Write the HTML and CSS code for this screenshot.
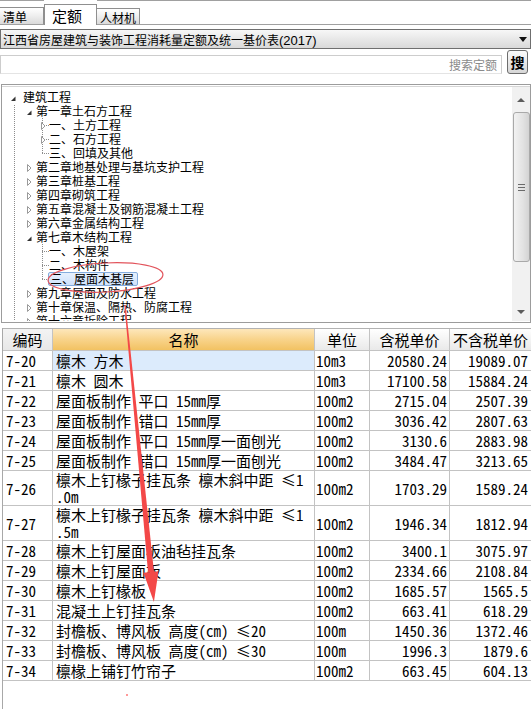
FILE: index.html
```html
<!DOCTYPE html>
<html lang="zh-CN">
<head>
<meta charset="utf-8">
<title>定额</title>
<link rel="stylesheet" href="styles.css">
</head>
<body>
<div class="tabs">
  <div class="tab t1">清单</div>
  <div class="tab active"><span class="lbl">定额</span></div>
  <div class="tab t3">人材机</div>
  <div class="tabfill"></div>
</div>

<div class="combo">
  <span class="combo-text">江西省房屋建筑与装饰工程消耗量定额及统一基价表<span class="yr">(2017)</span></span>
  <svg class="caret" width="8" height="5" viewBox="0 0 8 5"><path d="M0 0H8L4 5Z" fill="#111"/></svg>
</div>

<div class="search">
  <div class="input"><span class="ph">搜索定额</span></div>
  <button class="btn">搜</button>
</div>

<div class="tree">
  <div class="tree-in">
    <div class="nodes">
      <div class="row l0"><svg class="exp" width="6" height="14" viewBox="0 0 6 14"><path d="M4.5 6.5V11H0Z" fill="#333"/></svg><span>建筑工程</span></div>
      <div class="row l1"><svg class="exp" width="6" height="14" viewBox="0 0 6 14"><path d="M4.5 6.5V11H0Z" fill="#333"/></svg><span>第一章土石方工程</span></div>
      <div class="row l2 mid"><svg class="exp" width="6" height="14" viewBox="0 0 6 14"><path d="M0.5 4.5L4 8L0.5 11.5Z" fill="#fff" stroke="#9a9a9a"/></svg><span>一、土方工程</span></div>
      <div class="row l2 mid"><svg class="exp" width="6" height="14" viewBox="0 0 6 14"><path d="M0.5 4.5L4 8L0.5 11.5Z" fill="#fff" stroke="#9a9a9a"/></svg><span>二、石方工程</span></div>
      <div class="row l2 last"><i class="exp"></i><span>三、回填及其他</span></div>
      <div class="row l1"><svg class="exp" width="6" height="14" viewBox="0 0 6 14"><path d="M0.5 4.5L4 8L0.5 11.5Z" fill="#fff" stroke="#9a9a9a"/></svg><span>第二章地基处理与基坑支护工程</span></div>
      <div class="row l1"><svg class="exp" width="6" height="14" viewBox="0 0 6 14"><path d="M0.5 4.5L4 8L0.5 11.5Z" fill="#fff" stroke="#9a9a9a"/></svg><span>第三章桩基工程</span></div>
      <div class="row l1"><svg class="exp" width="6" height="14" viewBox="0 0 6 14"><path d="M0.5 4.5L4 8L0.5 11.5Z" fill="#fff" stroke="#9a9a9a"/></svg><span>第四章砌筑工程</span></div>
      <div class="row l1"><svg class="exp" width="6" height="14" viewBox="0 0 6 14"><path d="M0.5 4.5L4 8L0.5 11.5Z" fill="#fff" stroke="#9a9a9a"/></svg><span>第五章混凝土及钢筋混凝土工程</span></div>
      <div class="row l1"><svg class="exp" width="6" height="14" viewBox="0 0 6 14"><path d="M0.5 4.5L4 8L0.5 11.5Z" fill="#fff" stroke="#9a9a9a"/></svg><span>第六章金属结构工程</span></div>
      <div class="row l1"><svg class="exp" width="6" height="14" viewBox="0 0 6 14"><path d="M4.5 6.5V11H0Z" fill="#333"/></svg><span>第七章木结构工程</span></div>
      <div class="row l2 mid"><i class="exp"></i><span>一、木屋架</span></div>
      <div class="row l2 mid"><i class="exp"></i><span>二、木构件</span></div>
      <div class="row l2 last"><i class="exp"></i><span class="sel">三、屋面木基层</span></div>
      <div class="row l1"><svg class="exp" width="6" height="14" viewBox="0 0 6 14"><path d="M0.5 4.5L4 8L0.5 11.5Z" fill="#fff" stroke="#9a9a9a"/></svg><span>第九章屋面及防水工程</span></div>
      <div class="row l1"><svg class="exp" width="6" height="14" viewBox="0 0 6 14"><path d="M0.5 4.5L4 8L0.5 11.5Z" fill="#fff" stroke="#9a9a9a"/></svg><span>第十章保温、隔热、防腐工程</span></div>
      <div class="row l1"><svg class="exp" width="6" height="14" viewBox="0 0 6 14"><path d="M0.5 4.5L4 8L0.5 11.5Z" fill="#fff" stroke="#9a9a9a"/></svg><span>第十六章拆除工程</span></div>
    </div>
    <div class="vscroll">
      <svg class="up" width="8" height="4" viewBox="0 0 8 4"><path d="M4 0L8 4H0Z" fill="#5c5c5c"/></svg>
      <div class="thumb"><i class="grip"></i></div>
      <svg class="down" width="8" height="4" viewBox="0 0 8 4"><path d="M0 0H8L4 4Z" fill="#5c5c5c"/></svg>
    </div>
  </div>
</div>

<div class="grid">
  <div class="table">
    <div class="c h h-code">编码</div>
    <div class="c h h-name">名称</div>
    <div class="c h h-rest">单位</div>
    <div class="c h h-rest">含税单价</div>
    <div class="c h h-rest">不含税单价</div>

    <div class="c code">7-20</div><div class="c name hl">檩木 方木</div><div class="c unit">10m3</div><div class="c num">20580.24</div><div class="c num last">19089.07</div>
    <div class="c code">7-21</div><div class="c name">檩木 圆木</div><div class="c unit">10m3</div><div class="c num">17100.58</div><div class="c num last">15884.24</div>
    <div class="c code">7-22</div><div class="c name">屋面板制作 平口 15mm厚</div><div class="c unit">100m2</div><div class="c num">2715.04</div><div class="c num last">2507.39</div>
    <div class="c code">7-23</div><div class="c name">屋面板制作 错口 15mm厚</div><div class="c unit">100m2</div><div class="c num">3036.42</div><div class="c num last">2807.63</div>
    <div class="c code">7-24</div><div class="c name">屋面板制作 平口 15mm厚一面刨光</div><div class="c unit">100m2</div><div class="c num">3130.6</div><div class="c num last">2883.98</div>
    <div class="c code">7-25</div><div class="c name">屋面板制作 错口 15mm厚一面刨光</div><div class="c unit">100m2</div><div class="c num">3484.47</div><div class="c num last">3213.65</div>
    <div class="c code">7-26</div><div class="c name tall">檩木上钉椽子挂瓦条 檩木斜中距 ≤1<br>.0m</div><div class="c unit">100m2</div><div class="c num">1703.29</div><div class="c num last">1589.24</div>
    <div class="c code">7-27</div><div class="c name tall">檩木上钉椽子挂瓦条 檩木斜中距 ≤1<br>.5m</div><div class="c unit">100m2</div><div class="c num">1946.34</div><div class="c num last">1812.94</div>
    <div class="c code">7-28</div><div class="c name">檩木上钉屋面板油毡挂瓦条</div><div class="c unit">100m2</div><div class="c num">3400.1</div><div class="c num last">3075.97</div>
    <div class="c code">7-29</div><div class="c name">檩木上钉屋面板</div><div class="c unit">100m2</div><div class="c num">2334.66</div><div class="c num last">2108.84</div>
    <div class="c code">7-30</div><div class="c name">檩木上钉椽板</div><div class="c unit">100m2</div><div class="c num">1685.57</div><div class="c num last">1565.5</div>
    <div class="c code">7-31</div><div class="c name">混凝土上钉挂瓦条</div><div class="c unit">100m2</div><div class="c num">663.41</div><div class="c num last">618.29</div>
    <div class="c code">7-32</div><div class="c name">封檐板、博风板 高度(cm) ≤20</div><div class="c unit">100m</div><div class="c num">1450.36</div><div class="c num last">1372.46</div>
    <div class="c code">7-33</div><div class="c name">封檐板、博风板 高度(cm) ≤30</div><div class="c unit">100m</div><div class="c num">1996.3</div><div class="c num last">1879.6</div>
    <div class="c code">7-34</div><div class="c name">檩椽上铺钉竹帘子</div><div class="c unit">100m2</div><div class="c num">663.45</div><div class="c num last">604.13</div>
  </div>
</div>

<svg class="markup" width="531" height="709" viewBox="0 0 531 709">
  <ellipse cx="105.5" cy="277.5" rx="57.5" ry="14.5" transform="rotate(-3 105.5 277.5)" fill="none" stroke="#e2545c" stroke-width="1.2"/>
  <polygon points="124.4,305 125.6,305 154,572 148,572" fill="#f34848"/>
  <polygon points="143.5,572.7 158.5,571.3 153.9,602" fill="#f34848"/>
  <circle cx="127" cy="695" r="1" fill="#f77"/>
</svg>
</body>
</html>
```

FILE: styles.css
```css
* { box-sizing: border-box; margin: 0; padding: 0; }
html, body { width: 531px; height: 709px; overflow: hidden; background: #fff; }
body {
  position: relative;
  font-family: "Noto Sans CJK SC", "Noto Sans", sans-serif;
  font-size: 12px;
  color: #000;
}

/* ---------- tabs ---------- */
.tabs {
  display: flex;
  height: 25px;
  background: linear-gradient(#a0a0a0, #a0a0a0) 0 0 / 100% 1px no-repeat;
}
.tab {
  align-self: flex-end;
  height: 18px;
  border: 1px solid #8f8f8f;
  border-bottom-color: #a0a0a0;
  background: linear-gradient(#ffffff, #ececec 55%, #dadada);
  line-height: 16px;
  padding-top: 1px;
  font-size: 12px;
  white-space: nowrap;
}
.t1 { width: 44px; border-left: none; padding-left: 3px; }
.t3 { width: 43px; height: 17px; padding-left: 3px; border-left: none; }
.tab.active {
  align-self: stretch;
  height: auto;
  width: 53px;
  border: none;
  background: #fff;
  padding-top: 4px;
}
.lbl {
  display: block;
  height: 21px;
  border: 1px solid #8f8f8f;
  border-bottom: none;
  font-size: 15px;
  line-height: 19px;
  padding-top: 1px;
  padding-left: 7px;
}
.tabfill { flex: 1; border-bottom: 1px solid #a0a0a0; }

/* ---------- combo ---------- */
.combo {
  margin-top: 4px;
  height: 20px;
  border: 1px solid #6f6f6f;
  background: linear-gradient(#f7f7f7, #e8e8e8 50%, #d9d9d9);
  display: flex;
  align-items: center;
  padding-left: 2px;
  font-size: 12px;
  white-space: nowrap;
}
.yr { font-family: "Liberation Sans", sans-serif; font-size: 13px; }
.caret { margin-left: auto; margin-right: 3px; }

/* ---------- search ---------- */
.search {
  display: flex;
  margin-top: 1px;
  gap: 5px;
  padding-right: 3px;
}
.input {
  flex: 1;
  margin-top: 5px;
  height: 19px;
  border: 1px solid #cdcdcd;
  border-bottom-color: #e4e4e4;
  display: flex;
  justify-content: flex-end;
  align-items: center;
  padding-right: 4px;
}
.ph { color: #8a8a8a; font-size: 12px; }
.btn {
  width: 21px;
  height: 24px;
  border: 1px solid #6d6d6d;
  border-radius: 3px;
  background: linear-gradient(#fbfbfb, #e9e9e9 50%, #d6d6d6);
  font-family: "Noto Sans CJK SC", sans-serif;
  font-size: 14px;
  font-weight: bold;
  color: #000;
  padding: 0;
}

/* ---------- tree ---------- */
.tree {
  margin-top: 10px;
  margin-left: 1px;
  height: 239px;
  border: 1px solid #9c9c9c;
}
.tree-in {
  margin-top: 1px;
  height: 235px;
  border-top: 1px solid #d6d6d6;
  display: flex;
}
.nodes {
  flex: 1;
  overflow: hidden;
  padding-top: 3px;
  background: repeating-linear-gradient(#8c8c8c 0 1px, transparent 1px 2px) 12px 18px / 1px 100% no-repeat;
}
.row {
  display: flex;
  align-items: center;
  height: 14px;
  line-height: 14px;
  font-size: 12px;
  white-space: nowrap;
}
.exp { display: block; flex: none; width: 6px; height: 14px; }
.l0 { padding-left: 9px; }
.l0 .exp { margin-right: 6px; }
.l1 { padding-left: 25px; }
.l1 .exp { margin-right: 3px; }
.l2 { padding-left: 39px; }
.l2 .exp { margin-right: 2px; }
.l2.mid {
  background:
    repeating-linear-gradient(#8c8c8c 0 1px, transparent 1px 2px) 40px 0 / 1px 14px no-repeat,
    repeating-linear-gradient(to right, #8c8c8c 0 1px, transparent 1px 2px) 40px 7px / 7px 1px no-repeat;
}
.l2.last {
  background:
    repeating-linear-gradient(#8c8c8c 0 1px, transparent 1px 2px) 40px 0 / 1px 8px no-repeat,
    repeating-linear-gradient(to right, #8c8c8c 0 1px, transparent 1px 2px) 40px 7px / 7px 1px no-repeat;
}
.sel {
  margin-left: -1px;
  height: 14px;
  line-height: 12px;
  padding: 0 3px 0 1px;
  border: 1px solid #84acdd;
  border-radius: 2px;
  background: linear-gradient(#e6f0fd, #cfe2fb);
}

.vscroll {
  flex: none;
  width: 18px;
  background: #f1f1f1;
  display: flex;
  flex-direction: column;
  align-items: center;
}
.up { margin-top: 11px; }
.thumb {
  margin-top: 10px;
  width: 17px;
  height: 150px;
  border: 1px solid #a9a9a9;
  border-radius: 3px;
  background: linear-gradient(to right, #f2f2f2, #e2e2e2 60%, #d3d3d3);
  display: flex;
  align-items: center;
  justify-content: center;
}
.grip {
  display: block;
  width: 7px;
  height: 7px;
  background: repeating-linear-gradient(#6a6a6a 0 1px, transparent 1px 3px);
}
.down { margin-top: auto; margin-bottom: 7px; }

/* ---------- grid ---------- */
.grid {
  margin-top: 5px;
  margin-left: 2px;
  height: 381px;
  border-left: 1px solid #a8a8a8;
}
.table {
  display: grid;
  grid-template-columns: 50px 262px 55px 80px 82px;
  grid-template-rows: 22px repeat(6, 20px) 35px 35px repeat(7, 20px);
  border-top: 1px solid #b2b2b2;
  font-family: "Noto Sans Mono CJK SC", "Noto Sans CJK SC", monospace;
  font-size: 15px;
}
.c {
  border-right: 1px solid #c3c3c3;
  border-bottom: 1px solid #c3c3c3;
  display: flex;
  align-items: center;
  white-space: nowrap;
  overflow: hidden;
}
.h {
  justify-content: center;
  font-family: "Noto Sans CJK SC", sans-serif;
  font-size: 15px;
}
.h-code { background: linear-gradient(#f3f3f3, #e8e8e8); }
.h-name { background: linear-gradient(#fde7bb, #f8d38a 50%, #f2c262); }
.h-rest { background: linear-gradient(#ffffff, #f4f4f4 50%, #e9e9e9); }
.code { padding-left: 3px; }
.name { padding-left: 3px; }
.name.hl { background: #dcebfc; }
.name.tall { display: block; line-height: 17px; }
.unit { padding-left: 1px; }
.num { justify-content: flex-end; padding-right: 2px; }
.num.last { padding-right: 3px; }

/* ---------- annotation overlay ---------- */
.markup { position: absolute; left: 0; top: 0; pointer-events: none; }
```
